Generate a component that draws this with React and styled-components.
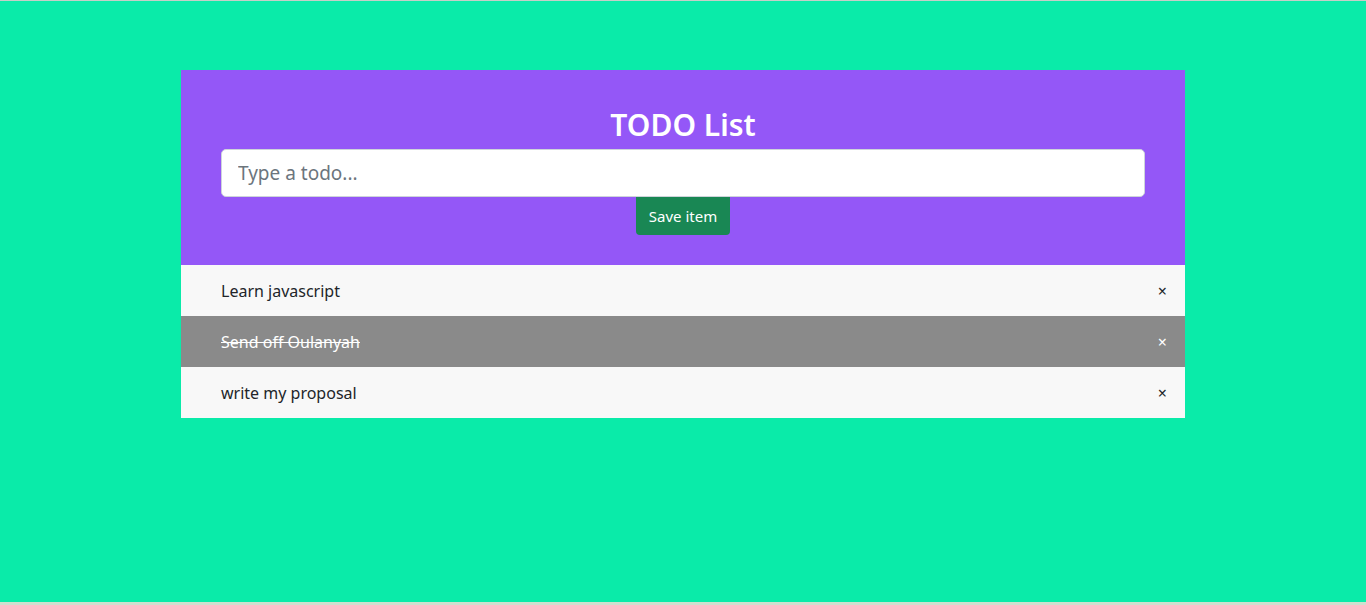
import React, { useState } from 'react';
import styled, { createGlobalStyle } from 'styled-components';

const GlobalStyle = createGlobalStyle`
  html, body {
    margin: 0;
    padding: 0;
    height: 100%;
  }
  body {
    font-family: "Noto Sans", "Open Sans", sans-serif;
    background: #cfe0cf;
    border-top: 1px solid #c6cfc8;
    box-sizing: border-box;
  }
  #root {
    height: 100%;
  }
  * {
    box-sizing: border-box;
  }
`;

const Page = styled.div`
  background: #0aeba9;
  height: 601px;
  padding-top: 69px;
`;

const Card = styled.div`
  width: 1004px;
  margin-left: 181px;
`;

const Header = styled.div`
  background: #9457f7;
  padding: 35px 40px 30px;
  display: flex;
  flex-direction: column;
  align-items: center;
`;

const Title = styled.h1`
  margin: 0 0 4px;
  color: #fff;
  font-size: 30px;
  font-weight: 600;
  line-height: 40px;
`;

const Input = styled.input`
  width: 100%;
  height: 48px;
  border: 1px solid #ced4da;
  border-radius: 5px;
  padding: 0 16px;
  font-family: inherit;
  font-size: 19px;
  color: #212529;
  outline: none;
  &::placeholder {
    color: #6c757d;
  }
`;

const SaveButton = styled.button`
  background: #198754;
  color: #fff;
  border: none;
  border-radius: 0 0 4px 4px;
  height: 38px;
  padding: 0 13px;
  font-family: inherit;
  font-size: 15px;
  cursor: pointer;
`;

const List = styled.ul`
  list-style: none;
  margin: 0;
  padding: 0;
`;

const Item = styled.li`
  height: 51px;
  display: flex;
  align-items: center;
  justify-content: space-between;
  padding: 0 18px 0 40px;
  font-size: 16px;
  background: ${p => (p.done ? '#8a8a8a' : '#f8f8f8')};
  color: ${p => (p.done ? '#fff' : '#212529')};
`;

const Label = styled.span`
  text-decoration: ${p => (p.done ? 'line-through' : 'none')};
`;

const Remove = styled.button`
  background: none;
  border: none;
  padding: 0;
  font-family: inherit;
  font-size: 16px;
  color: inherit;
  cursor: pointer;
`;

export default function App() {
  const [todos, setTodos] = useState([
    { text: 'Learn javascript', done: false },
    { text: 'Send off Oulanyah', done: true },
    { text: 'write my proposal', done: false },
  ]);
  const [value, setValue] = useState('');

  const save = () => {
    if (!value.trim()) return;
    setTodos([...todos, { text: value, done: false }]);
    setValue('');
  };

  return (
    <>
      <GlobalStyle />
      <Page>
        <Card>
          <Header>
            <Title>TODO List</Title>
            <Input
              placeholder="Type a todo..."
              value={value}
              onChange={e => setValue(e.target.value)}
            />
            <SaveButton onClick={save}>Save item</SaveButton>
          </Header>
          <List>
            {todos.map((t, i) => (
              <Item key={i} done={t.done}>
                <Label done={t.done}>{t.text}</Label>
                <Remove onClick={() => setTodos(todos.filter((_, j) => j !== i))}>×</Remove>
              </Item>
            ))}
          </List>
        </Card>
      </Page>
    </>
  );
}
